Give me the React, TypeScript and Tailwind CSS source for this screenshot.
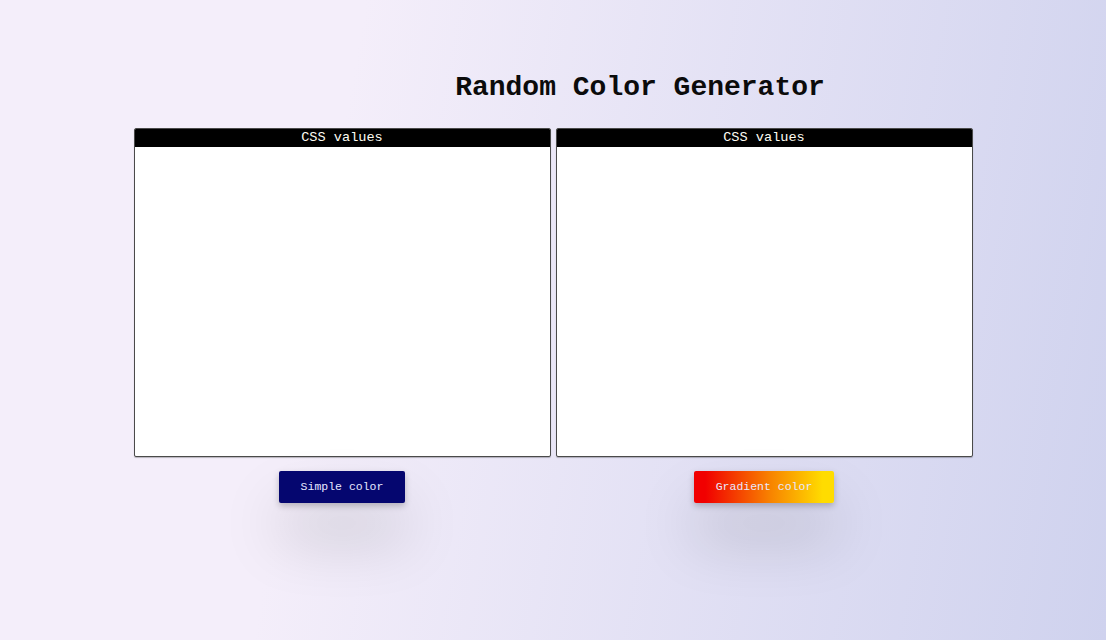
// App.tsx

type Panel = {
  label: string
  button: string
  buttonClass: string
}

const panels: Panel[] = [
  {
    label: 'CSS values',
    button: 'Simple color',
    buttonClass: 'bg-[#05066f]',
  },
  {
    label: 'CSS values',
    button: 'Gradient color',
    buttonClass: 'bg-[linear-gradient(to_right,#f10000_8%,#f88400_55%,#ffdc00_92%)]',
  },
]

export default function App() {
  return (
    <div className="min-h-[640px] w-full bg-[linear-gradient(100deg,#f4eefa_30%,#cfd2ee_100%)] font-['Liberation_Mono',monospace] pt-[68px]">
      <h1 className="pl-[174px] text-center text-[28px] font-bold leading-[40px] text-[#0b0b0b]">
        Random Color Generator
      </h1>

      <div className="mt-[20px] flex justify-center gap-[5px]">
        {panels.map((panel) => (
          <div key={panel.button} className="flex w-[417px] flex-col items-center">
            <div className="h-[329px] w-full overflow-hidden rounded-[2px] border border-[#4a4a4a] bg-white shadow-[0_1px_1px_rgba(0,0,0,0.25)]">
              <div className="h-[18px] bg-black text-center text-[13.6px] leading-[18px] text-[#fdfcf3]">
                {panel.label}
              </div>
            </div>
            <button
              className={`mt-[14px] h-[32px] rounded-[2px] px-[21.5px] text-[11.5px] text-[#e8e8ff] shadow-[0_3px_6px_rgba(0,0,0,0.22),0_36px_60px_rgba(0,0,0,0.17)] ${panel.buttonClass}`}
            >
              {panel.button}
            </button>
          </div>
        ))}
      </div>
    </div>
  )
}
